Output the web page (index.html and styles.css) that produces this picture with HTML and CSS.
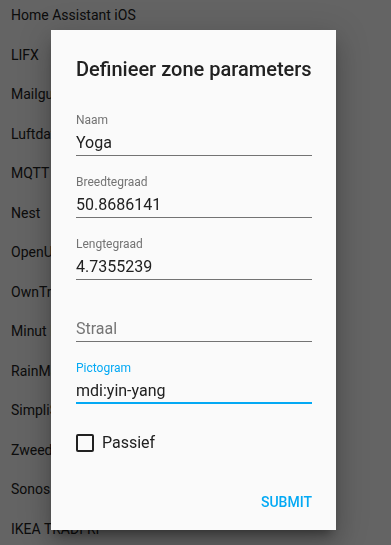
FILE: index.html
```html
<!DOCTYPE html>
<html lang="nl">
<head>
    <meta charset="UTF-8">
    <meta name="viewport" content="width=device-width, initial-scale=1.0">
    <title>Integraties</title>
    <link rel="stylesheet" href="styles.css">
</head>
<body>
    <ul class="integrations">
        <li>Home Assistant iOS</li>
        <li>LIFX</li>
        <li>Mailgun</li>
        <li>Luftdaten</li>
        <li>MQTT</li>
        <li>Nest</li>
        <li>OpenUV</li>
        <li>OwnTracks</li>
        <li>Minut Point</li>
        <li>RainMachine</li>
        <li>SimpliSafe</li>
        <li>Zweedse weerdienst (SMHI)</li>
        <li>Sonos</li>
        <li>IKEA TRÅDFRI</li>
    </ul>

    <div class="backdrop"></div>

    <form class="dialog">
        <h2 class="dialog-title">Definieer zone parameters</h2>

        <div class="fields">
            <div class="field">
                <label for="name">Naam</label>
                <input id="name" type="text" value="Yoga">
            </div>
            <div class="field">
                <label for="lat">Breedtegraad</label>
                <input id="lat" type="text" value="50.8686141">
            </div>
            <div class="field">
                <label for="lon">Lengtegraad</label>
                <input id="lon" type="text" value="4.7355239">
            </div>
            <div class="field empty">
                <input id="radius" type="text" placeholder="Straal">
            </div>
            <div class="field focused">
                <label for="icon">Pictogram</label>
                <input id="icon" type="text" value="mdi:yin-yang">
            </div>
        </div>

        <label class="checkbox-row">
            <input type="checkbox" class="checkbox">
            <span>Passief</span>
        </label>

        <div class="actions">
            <button type="submit" class="submit-btn">Submit</button>
        </div>
    </form>
</body>
</html>
```

FILE: styles.css
```css
body {
    margin: 0;
    font-family: Roboto, 'Noto Sans', sans-serif;
    background-color: #fafafa;
    color: #212121;
}
.integrations {
    list-style: none;
    margin: -4px 0 0;
    padding: 0 0 0 11px;
}
.integrations li {
    height: 39.5px;
    line-height: 39.5px;
    font-size: 14px;
    white-space: nowrap;
}
.backdrop {
    position: fixed;
    top: 0;
    left: 0;
    right: 0;
    bottom: 0;
    background-color: rgba(0, 0, 0, 0.6);
}
.dialog {
    position: fixed;
    top: 30px;
    left: 51px;
    width: 285px;
    height: 500px;
    box-sizing: border-box;
    padding: 23px 24px 10px 25px;
    background-color: #fafafa;
    display: flex;
    flex-direction: column;
    box-shadow: 0 16px 24px 2px rgba(0, 0, 0, 0.14),
                0 6px 30px 5px rgba(0, 0, 0, 0.12),
                0 8px 10px -5px rgba(0, 0, 0, 0.4);
}
.dialog-title {
    margin: 0;
    font-size: 20px;
    font-weight: 500;
    line-height: 32px;
    color: #212121;
}
.fields {
    margin-top: 28px;
    display: flex;
    flex-direction: column;
    gap: 19px;
}
.field label {
    display: block;
    font-size: 12px;
    line-height: 15px;
    color: #737373;
}
.field input {
    display: block;
    width: 100%;
    height: 24px;
    margin: 2px 0 0;
    padding: 0 0 1px;
    border: none;
    border-bottom: 1px solid #737373;
    background: transparent;
    font-family: inherit;
    font-size: 16px;
    color: #212121;
    outline: none;
}
.field.empty {
    padding-top: 15px;
}
.field input::placeholder {
    color: #757575;
}
.field.focused label {
    color: #03a9f4;
}
.field.focused input {
    padding-bottom: 0;
    border-bottom: 2px solid #03a9f4;
}
.checkbox-row {
    display: flex;
    align-items: center;
    gap: 8px;
    margin-top: 30px;
    font-size: 16px;
    line-height: 18px;
    color: #212121;
}
.checkbox {
    appearance: none;
    width: 18px;
    height: 18px;
    margin: 0;
    box-sizing: border-box;
    border: 2px solid #212121;
    border-radius: 2px;
    background: transparent;
}
.actions {
    margin-top: auto;
    display: flex;
    justify-content: flex-end;
}
.submit-btn {
    padding: 0;
    border: none;
    background: none;
    font-family: inherit;
    font-size: 14px;
    font-weight: 500;
    line-height: 36px;
    text-transform: uppercase;
    color: #03a9f4;
    cursor: pointer;
}
```
